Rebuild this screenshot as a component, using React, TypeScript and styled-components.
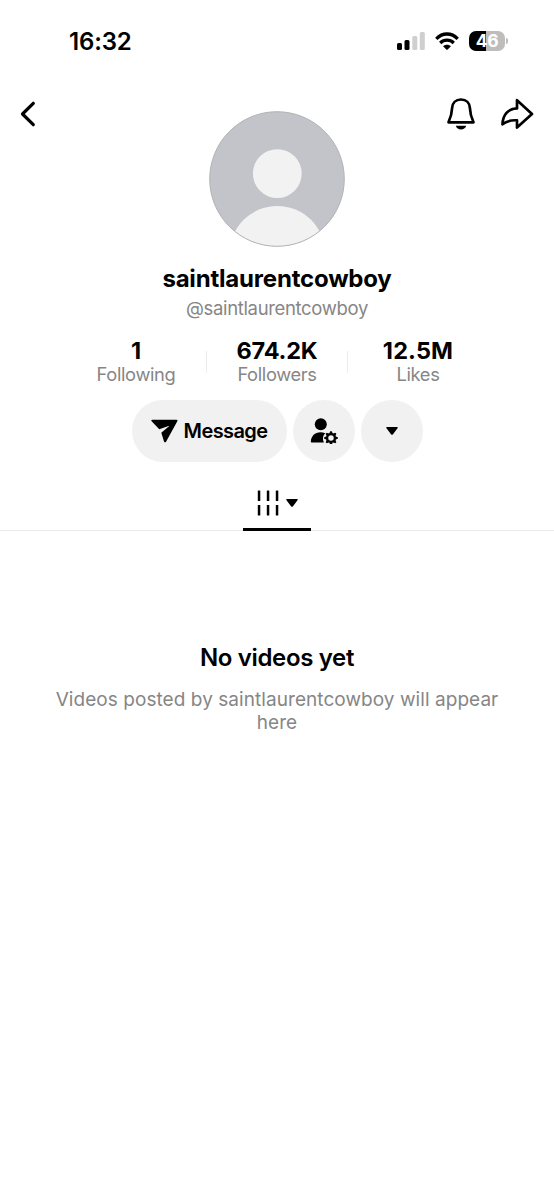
import React from 'react';
import styled, { createGlobalStyle } from 'styled-components';

const GlobalStyle = createGlobalStyle`
  * { box-sizing: border-box; }
  body {
    margin: 0;
    background: #fff;
    color: #000;
    font-family: Inter, Roboto, "Liberation Sans", sans-serif;
  }
  button {
    border: 0;
    padding: 0;
    background: none;
    color: inherit;
    font: inherit;
  }
  svg { display: block; flex: none; }
`;

const Screen = styled.main`
  display: flex;
  flex-direction: column;
  width: 100%;
  max-width: 554px;
  min-height: 1200px;
  background: #fff;
`;

const StatusBar = styled.div`
  display: flex;
  justify-content: space-between;
  align-items: center;
  height: 82px;
  padding: 0 46px 0 69px;
`;

const Clock = styled.time`
  padding-top: 2px;
  font-size: 24px;
  font-weight: 600;
  line-height: 28px;
  letter-spacing: -0.15px;
`;

const Indicators = styled.div`
  display: flex;
  align-items: center;
  gap: 10px;
`;

const BatteryWrap = styled.div`
  display: flex;
  align-items: center;
  gap: 1px;
`;

const Battery = styled.div`
  display: flex;
  align-items: center;
  justify-content: center;
  width: 36px;
  height: 20px;
  border-radius: 7px;
  background: linear-gradient(90deg, #000 47%, #bdbdbd 47%);
  color: #fff;
  font-size: 17.5px;
  font-weight: 700;
  line-height: 20px;
  letter-spacing: -0.3px;
`;

const BatteryTip = styled.div`
  width: 2px;
  height: 6px;
  border-radius: 0 2px 2px 0;
  background: #bdbdbd;
`;

const Header = styled.header`
  display: grid;
  grid-template-columns: 1fr 136px 1fr;
  align-items: start;
  padding: 13px 20px 0;
`;

const NavGroup = styled.div<{ $end?: boolean }>`
  display: flex;
  align-items: center;
  justify-content: ${p => (p.$end ? 'flex-end' : 'flex-start')};
  gap: 24px;
  height: 38px;
`;

const AvatarFrame = styled.div`
  padding-top: 16px;
`;

const Profile = styled.section`
  display: flex;
  flex-direction: column;
  align-items: center;
`;

const Name = styled.h1`
  margin: 16px 0 0;
  font-size: 24px;
  font-weight: 700;
  line-height: 32px;
  letter-spacing: -0.2px;
`;

const Handle = styled.div`
  margin-top: 1px;
  color: #868686;
  font-size: 18.5px;
  line-height: 24px;
  letter-spacing: -0.34px;
`;

const Stats = styled.div`
  display: flex;
  align-items: center;
  margin-top: 18px;
`;

const Stat = styled.div`
  display: flex;
  flex-direction: column;
  align-items: center;
  width: 140px;
`;

const StatValue = styled.strong<{ $spacing: string }>`
  font-size: 23.5px;
  font-weight: 700;
  line-height: 26px;
  letter-spacing: ${p => p.$spacing};
`;

const StatLabel = styled.span`
  margin-top: -2px;
  color: #868686;
  font-size: 18.3px;
  line-height: 24px;
  letter-spacing: -0.35px;
`;

const StatDivider = styled.div`
  width: 1px;
  height: 22px;
  background: #ececec;
`;

const Actions = styled.div`
  display: flex;
  gap: 6px;
  margin-top: 14px;
`;

const ActionButton = styled.button<{ $wide?: boolean }>`
  display: flex;
  align-items: center;
  justify-content: center;
  gap: 6px;
  width: ${p => (p.$wide ? '155px' : '62px')};
  height: 62px;
  border-radius: 31px;
  background: #f1f1f1;
  font-size: 20px;
  font-weight: 600;
  letter-spacing: -0.6px;
`;

const TabBar = styled.nav`
  display: flex;
  justify-content: center;
  height: 69px;
  border-bottom: 1px solid #ececec;
`;

const Tab = styled.button`
  display: flex;
  align-items: center;
  justify-content: center;
  gap: 7px;
  width: 68px;
  height: 69px;
  padding-top: 15px;
  border-bottom: 3px solid #000;
`;

const Empty = styled.section`
  display: flex;
  flex-direction: column;
  align-items: center;
  padding: 111px 40px 0;
  text-align: center;
`;

const EmptyTitle = styled.h2`
  margin: 0;
  font-size: 24px;
  font-weight: 600;
  line-height: 32px;
  letter-spacing: -0.35px;
`;

const EmptyText = styled.p`
  margin: 15px 0 0;
  color: #868686;
  font-size: 19px;
  line-height: 22.5px;
  letter-spacing: 0.06px;
`;

const Signal = () => (
  <svg width="28" height="18" viewBox="0 0 28 18">
    <rect x="0" y="11" width="5" height="7" rx="1.5" />
    <rect x="7.5" y="8" width="5" height="10" rx="1.5" />
    <rect x="15.3" y="4" width="5" height="14" rx="1.5" fill="#cfcfcf" />
    <rect x="22.8" y="0" width="5" height="18" rx="1.5" fill="#cfcfcf" />
  </svg>
);

const Wifi = () => (
  <svg width="24" height="18" viewBox="0 0 24 18">
    <g fill="none" stroke="#000" strokeWidth="3.3">
      <path d="M1.3 6.8C7.5 .4 16.500 .4 22.700 6.800" />
      <path d="M5.200 11C9.100 7.200 14.900 7.200 18.800 11" />
    </g>
    <path d="M8.100 14.200C10.300 12.200 13.700 12.200 15.900 14.200L12.700 17.500Q12 18.100 11.300 17.500Z" />
  </svg>
);

const Back = () => (
  <svg width="16" height="26" viewBox="0 0 16 26" fill="none" stroke="#000" strokeWidth="3.200" strokeLinecap="round" strokeLinejoin="round">
    <path d="M13.300 2.300L2.500 13L13.300 23.700" />
  </svg>
);

const Bell = () => (
  <svg width="30" height="32" viewBox="0 0 30 32">
    <path d="M15 1.500C9.600 1.500 6.400 5.100 6.100 10C5.900 16 4.700 19.500 2.500 24.300H27.500C25.300 19.500 24.100 16 23.900 10C23.600 5.100 20.400 1.500 15 1.500Z" fill="none" stroke="#000" strokeWidth="2.700" strokeLinejoin="round" />
    <path d="M9.800 27.700H20.200C19.300 30.300 17.500 31.400 15 31.400S10.700 30.300 9.800 27.700Z" />
  </svg>
);

const Share = () => (
  <svg width="34" height="32" viewBox="0 0 34 32" fill="none" stroke="#000" strokeWidth="2.700" strokeLinejoin="round">
    <path d="M17 2.200L32 16L17 29.500V22.300C10.500 22 6.300 23 2.500 26.300C2.800 17 8 10.700 17 10.400Z" />
  </svg>
);

const Avatar = () => (
  <svg width="136" height="136" viewBox="0 0 136 136">
    <defs>
      <clipPath id="avatar-disc"><circle cx="68" cy="68" r="67.300" /></clipPath>
    </defs>
    <circle cx="68" cy="68" r="67.300" fill="#c3c4c9" />
    <g clipPath="url(#avatar-disc)" fill="#f2f2f2">
      <circle cx="68.300" cy="62.600" r="24.400" />
      <circle cx="68.300" cy="142.500" r="47.600" />
    </g>
    <circle cx="68" cy="68" r="67.300" fill="none" stroke="#b3b3b6" strokeWidth="1" />
  </svg>
);

const Plane = () => (
  <svg width="27" height="24" viewBox="0 0 27 24">
    <path d="M1.200.8H25.500Q27 .8 26.300 2.200L15.200 22.500Q14 24.200 13 22.500L10.300 13.800L18 7.300Q18.200 6.800 17.500 7L8.300 10.200L.6 2.300Q-.2 1 1.200.8Z" />
  </svg>
);

const teeth = [0, 45, 90, 135, 180, 225, 270, 315];

const PersonGear = () => (
  <svg width="28" height="26" viewBox="0 0 28 26">
    <circle cx="10.800" cy="6.300" r="6" />
    <path d="M1.800 24.500Q.7 24.500.8 23.400C1.200 18 4.800 14.200 10.500 14.200C12.300 14.200 13.800 14.500 15.200 15.200C12.700 17.500 12.300 21.300 13.900 24.500Z" />
    <circle cx="21" cy="20" r="3.900" fill="none" stroke="#000" strokeWidth="2.300" />
    {teeth.map(a => (
      <path key={a} d="M19.200 15.800L20.200 13.200H21.800L22.800 15.800Z" transform={`rotate(${a} 21 20)`} />
    ))}
  </svg>
);

const Caret = () => (
  <svg width="12" height="8" viewBox="0 0 12 8">
    <path d="M1 0H11Q12.500 0 11.500 1.300L7 7.300Q6 8.400 5 7.300L.5 1.300Q-.5 0 1 0Z" />
  </svg>
);

const Grid = () => (
  <svg width="22" height="26" viewBox="0 0 22 26">
    {[0.8, 9.8, 18.8].map(x => (
      <React.Fragment key={x}>
        <rect x={x} y="0.500" width="2.500" height="10.500" rx=".5" />
        <rect x={x} y="15" width="2.500" height="10.500" rx=".5" />
      </React.Fragment>
    ))}
  </svg>
);

const stats = [
  { value: '1', label: 'Following', spacing: '0' },
  { value: '674.2K', label: 'Followers', spacing: '-0.2px' },
  { value: '12.5M', label: 'Likes', spacing: '0.15px' },
];

export default function App() {
  return (
    <>
      <GlobalStyle />
      <Screen>
        <StatusBar>
          <Clock>16:32</Clock>
          <Indicators>
            <Signal />
            <Wifi />
            <BatteryWrap>
              <Battery>46</Battery>
              <BatteryTip />
            </BatteryWrap>
          </Indicators>
        </StatusBar>
        <Header>
          <NavGroup>
            <button aria-label="Back"><Back /></button>
          </NavGroup>
          <AvatarFrame><Avatar /></AvatarFrame>
          <NavGroup $end>
            <button aria-label="Notifications"><Bell /></button>
            <button aria-label="Share"><Share /></button>
          </NavGroup>
        </Header>
        <Profile>
          <Name>saintlaurentcowboy</Name>
          <Handle>@saintlaurentcowboy</Handle>
          <Stats>
            {stats.map((s, i) => (
              <React.Fragment key={s.label}>
                {i > 0 && <StatDivider />}
                <Stat>
                  <StatValue $spacing={s.spacing}>{s.value}</StatValue>
                  <StatLabel>{s.label}</StatLabel>
                </Stat>
              </React.Fragment>
            ))}
          </Stats>
          <Actions>
            <ActionButton $wide><Plane />Message</ActionButton>
            <ActionButton aria-label="Manage"><PersonGear /></ActionButton>
            <ActionButton aria-label="More"><Caret /></ActionButton>
          </Actions>
        </Profile>
        <TabBar>
          <Tab aria-label="Videos">
            <Grid />
            <Caret />
          </Tab>
        </TabBar>
        <Empty>
          <EmptyTitle>No videos yet</EmptyTitle>
          <EmptyText>Videos posted by saintlaurentcowboy will appear here</EmptyText>
        </Empty>
      </Screen>
    </>
  );
}
